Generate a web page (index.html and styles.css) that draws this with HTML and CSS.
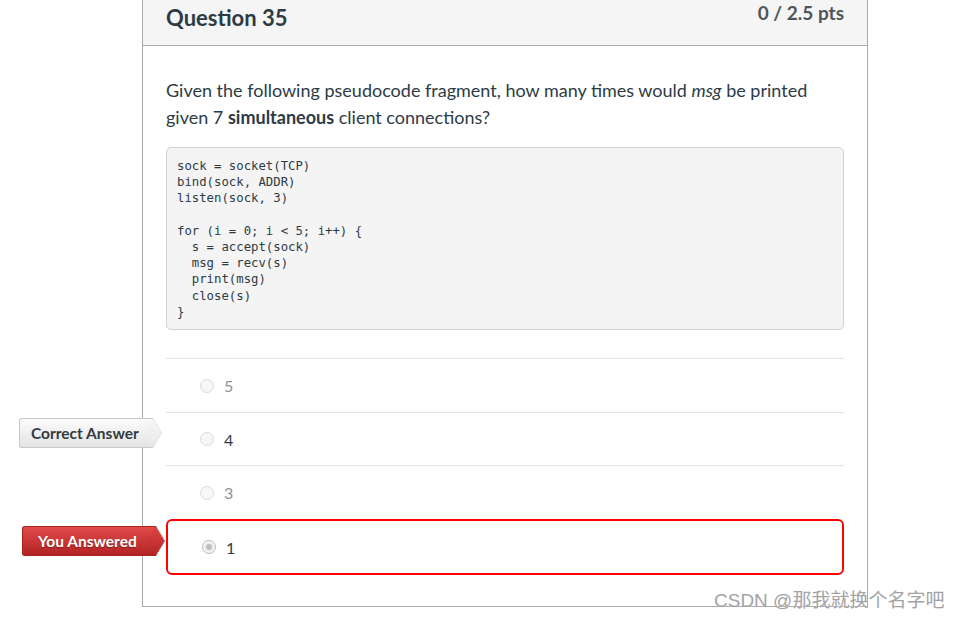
FILE: index.html
```html
<!DOCTYPE html>
<html>
<head>
<meta charset="utf-8">
<link rel="stylesheet" href="styles.css">
</head>
<body>
<div class="card">
  <div class="card-header">
    <h2 class="q-title">Question 35</h2>
    <div class="q-pts">0 / 2.5 pts</div>
  </div>
  <div class="card-body">
    <p class="q-text">Given the following pseudocode fragment, how many times would <em>msg</em> be printed given 7 <strong>simultaneous</strong> client connections?</p>
<pre class="code">sock = socket(TCP)
bind(sock, ADDR)
listen(sock, 3)

for (i = 0; i &lt; 5; i++) {
  s = accept(sock)
  msg = recv(s)
  print(msg)
  close(s)
}</pre>
    <div class="answers">
      <div class="answer">
        <span class="radio"></span><span class="ans-text muted">5</span>
      </div>
      <div class="answer">
        <div class="tag tag-correct"><span class="tag-label">Correct Answer</span></div>
        <span class="radio"></span><span class="ans-text">4</span>
      </div>
      <div class="answer">
        <span class="radio"></span><span class="ans-text muted">3</span>
      </div>
      <div class="answer answer-wrong">
        <div class="tag tag-wrong"><span class="tag-label">You Answered</span></div>
        <span class="radio radio-checked"></span><span class="ans-text">1</span>
      </div>
    </div>
  </div>
</div>
<div class="watermark">CSDN @那我就换个名字吧</div>
</body>
</html>
```
FILE: styles.css
```css
html, body {
  margin: 0;
  padding: 0;
  background: #fff;
}
body {
  font-family: Lato, "Noto Sans", sans-serif;
  color: #2d3b45;
  width: 961px;
  height: 617px;
  overflow: hidden;
  position: relative;
}
.card {
  margin-left: 142px;
  width: 724px;
  border: 1px solid #a9a9a9;
  border-top: none;
}
.card-header {
  height: 45px;
  background: #f5f5f5;
  border-bottom: 1px solid #a9a9a9;
  display: flex;
  justify-content: space-between;
  align-items: flex-start;
  padding: 0 23px;
}
.q-title {
  margin: 0;
  font-size: 22px;
  line-height: 36px;
  font-weight: 700;
  color: #2d3b45;
}
.q-pts {
  font-size: 19px;
  line-height: 26px;
  font-weight: 700;
  color: #4f5659;
}
.card-body {
  padding: 31px 23px 31px 23px;
}
.q-text {
  margin: 0;
  font-size: 18px;
  line-height: 27px;
  color: #2d3b45;
}
.code {
  margin: 16px 0 0 0;
  background: #f4f4f4;
  border: 1px solid #cfd3d6;
  border-radius: 5px;
  padding: 10px 10px 9px 10px;
  font-family: "DejaVu Sans Mono", "Liberation Mono", monospace;
  font-size: 12.3px;
  line-height: 16.2px;
  color: #2d3b45;
}
.answers {
  margin-top: 28px;
}
.answer {
  position: relative;
  border-top: 1px solid #e2e2e2;
  height: 53px;
  display: flex;
  align-items: center;
  padding-left: 34px;
}
.answer:nth-child(2) {
  height: 52px;
}
.answer-wrong {
  border: 2px solid #ff0000;
  border-radius: 6px;
  height: 52px;
  padding-left: 34px;
}
.radio {
  width: 12px;
  height: 12px;
  border-radius: 50%;
  border: 1px solid #dcdcdc;
  background: #f7f7f7;
  margin-right: 10px;
  flex: none;
}
.radio-checked {
  border-color: #bdbdbd;
  background: #e9e9e9;
  box-shadow: inset 0 0 0 2px #f4f4f4;
  position: relative;
}
.radio-checked::after {
  content: "";
  position: absolute;
  left: 3px;
  top: 3px;
  width: 6px;
  height: 6px;
  border-radius: 50%;
  background: #bfbfbf;
}
.ans-text {
  font-size: 16px;
  color: #2d3b45;
}
.ans-text.muted {
  color: #8e9397;
}
.tag {
  position: absolute;
  left: -147px;
  height: 30px;
  width: 134px;
  box-sizing: border-box;
  font-size: 15.5px;
  font-weight: 700;
  line-height: 28px;
  padding-left: 11px;
  border-radius: 3px 0 0 3px;
  white-space: nowrap;
}
.tag-label {
  position: relative;
  z-index: 1;
}
.tag::after {
  content: "";
  position: absolute;
  top: 3px;
  right: -10.5px;
  width: 21px;
  height: 21px;
  transform: scaleX(0.6) rotate(45deg);
  border-radius: 0 2px 0 0;
}
.tag-correct {
  top: 5px;
  color: #333c42;
  background: linear-gradient(#fbfbfb, #e4e4e4);
  border: 1px solid #c9c9c9;
  border-right: none;
}
.tag-correct::after {
  background: linear-gradient(135deg, #f6f6f6, #e8e8e8);
  border-top: 1px solid #c9c9c9;
  border-right: 1px solid #c9c9c9;
}
.tag-wrong {
  top: 5px;
  left: -146px;
  padding-left: 15px;
  color: #fff;
  text-shadow: 0 1px 1px rgba(0,0,0,0.35);
  background: linear-gradient(#e24a4a, #b22323);
  border: 1px solid #a82222;
  border-right: none;
}
.tag-wrong::after {
  background: linear-gradient(135deg, #dc4444, #b52727);
  border-top: 1px solid #a82222;
  border-right: 1px solid #a82222;
}
.watermark {
  position: absolute;
  left: 714px;
  top: 585px;
  font-family: "Liberation Sans", "Noto Sans CJK SC", sans-serif;
  font-size: 19px;
  color: #a3a3a3;
  text-shadow: 0 0 1px #fff;
  white-space: nowrap;
}
```
